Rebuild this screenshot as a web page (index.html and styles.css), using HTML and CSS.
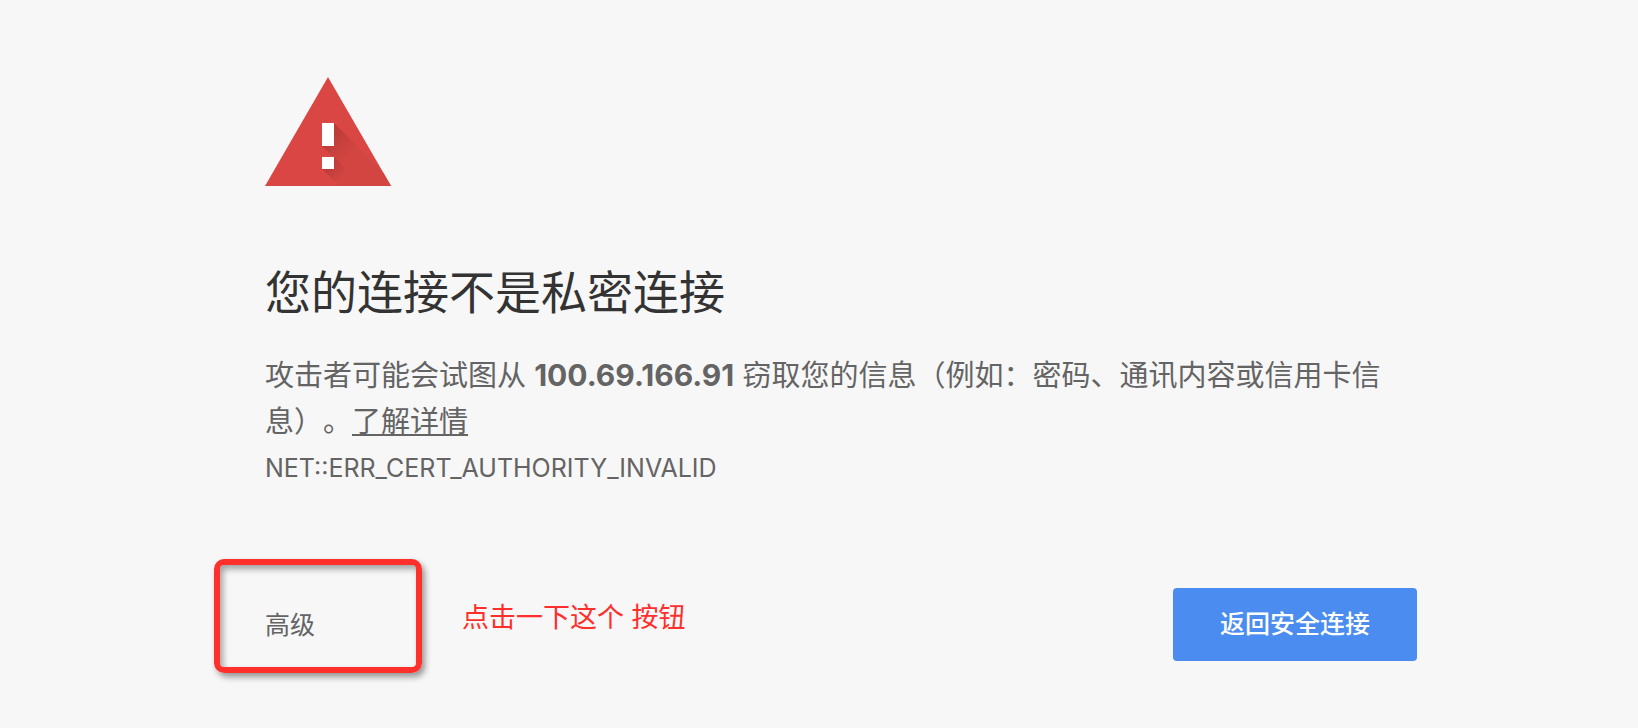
FILE: index.html
```html
<!DOCTYPE html>
<html lang="zh-CN">
<head>
<meta charset="utf-8">
<meta name="viewport" content="width=device-width, initial-scale=1">
<title>隐私设置错误</title>
<link rel="stylesheet" href="styles.css">
</head>
<body>
<main class="interstitial">
  <svg class="warning-icon" viewBox="0 0 126 109" aria-hidden="true">
    <defs>
      <linearGradient id="bar-shadow" gradientUnits="userSpaceOnUse" x1="60" y1="55" x2="84" y2="79">
        <stop offset="0" stop-color="#b53a36"/>
        <stop offset=".6" stop-color="#c8413d"/>
        <stop offset="1" stop-color="#d34541"/>
      </linearGradient>
      <linearGradient id="dot-shadow" gradientUnits="userSpaceOnUse" x1="61" y1="84" x2="77" y2="100">
        <stop offset="0" stop-color="#b53a36"/>
        <stop offset="1" stop-color="#d34541"/>
      </linearGradient>
      <clipPath id="triangle"><path d="M63 0 126 109H0z"/></clipPath>
    </defs>
    <path fill="#d94644" d="M63 0 126 109H0z"/>
    <g clip-path="url(#triangle)">
      <path fill="url(#bar-shadow)" d="M69 46 132 109H97L57 69z"/>
      <path fill="url(#dot-shadow)" d="M69 80 98 109H74L57 92z"/>
    </g>
    <path fill="#fff" d="M57 46h12v23H57zM57 80h12v12H57z"/>
  </svg>
  <h1 class="title">您的连接不是私密连接</h1>
  <p class="message">攻击者可能会试图从 <strong class="host">100.69.166.91</strong> 窃取您的信息（例如：密码、通讯内容或信用卡信息）。<a class="learn-more" href="#details">了解详情</a></p>
  <p class="error-code">NET::ERR_CERT_AUTHORITY_INVALID</p>
  <div class="actions">
    <div class="highlight"><button class="advanced" type="button">高级</button></div>
    <p class="hint">点击一下这个 按钮</p>
    <button class="back" type="button">返回安全连接</button>
  </div>
</main>
</body>
</html>
```
FILE: styles.css
```css
* {
  box-sizing: border-box;
}

body {
  margin: 0;
  background: #f7f7f7;
  color: #646464;
  font-family: Inter, "Noto Sans CJK SC", sans-serif;
  text-spacing-trim: space-all;
}

.interstitial {
  padding: 77px 221px 56px 265px;
}

.warning-icon {
  display: block;
  width: 126px;
  height: 109px;
}

.title {
  margin: 76px 0 31px;
  color: #333;
  font-size: 46px;
  font-weight: 400;
  line-height: 60px;
}

.message {
  margin: 0;
  font-size: 29px;
  line-height: 46px;
}

.host {
  font-size: 30px;
  line-height: 1;
}

.learn-more {
  color: inherit;
  text-decoration-thickness: 2px;
  text-decoration-skip-ink: none;
  text-underline-offset: 2px;
}

.error-code {
  margin: 0;
  font-size: 25px;
  line-height: 46px;
}

.actions {
  display: flex;
  align-items: flex-start;
  margin-top: 68px;
}

.highlight {
  width: 208px;
  height: 114px;
  margin-left: -51px;
  padding: 32px 0 0 45px;
  border: 6px solid #ff2f2c;
  border-radius: 10px;
  box-shadow: 3px 4px 6px rgb(0 0 0 / 40%), inset 3px 4px 6px rgb(0 0 0 / 35%);
}

.advanced,
.back {
  border: 0;
  font: inherit;
  font-size: 25px;
  cursor: pointer;
}

.advanced {
  padding: 10px 0;
  background: none;
  color: #646464;
  line-height: 36px;
}

.hint {
  margin: 39px 0 0 40px;
  color: #ff2f2c;
  font-size: 27px;
  line-height: 40px;
}

.back {
  margin: 29px 0 0 auto;
  padding: 18px 47px;
  border-radius: 4px;
  background: #4b8cf0;
  color: #fff;
  font-weight: 500;
  line-height: 37px;
}
```
